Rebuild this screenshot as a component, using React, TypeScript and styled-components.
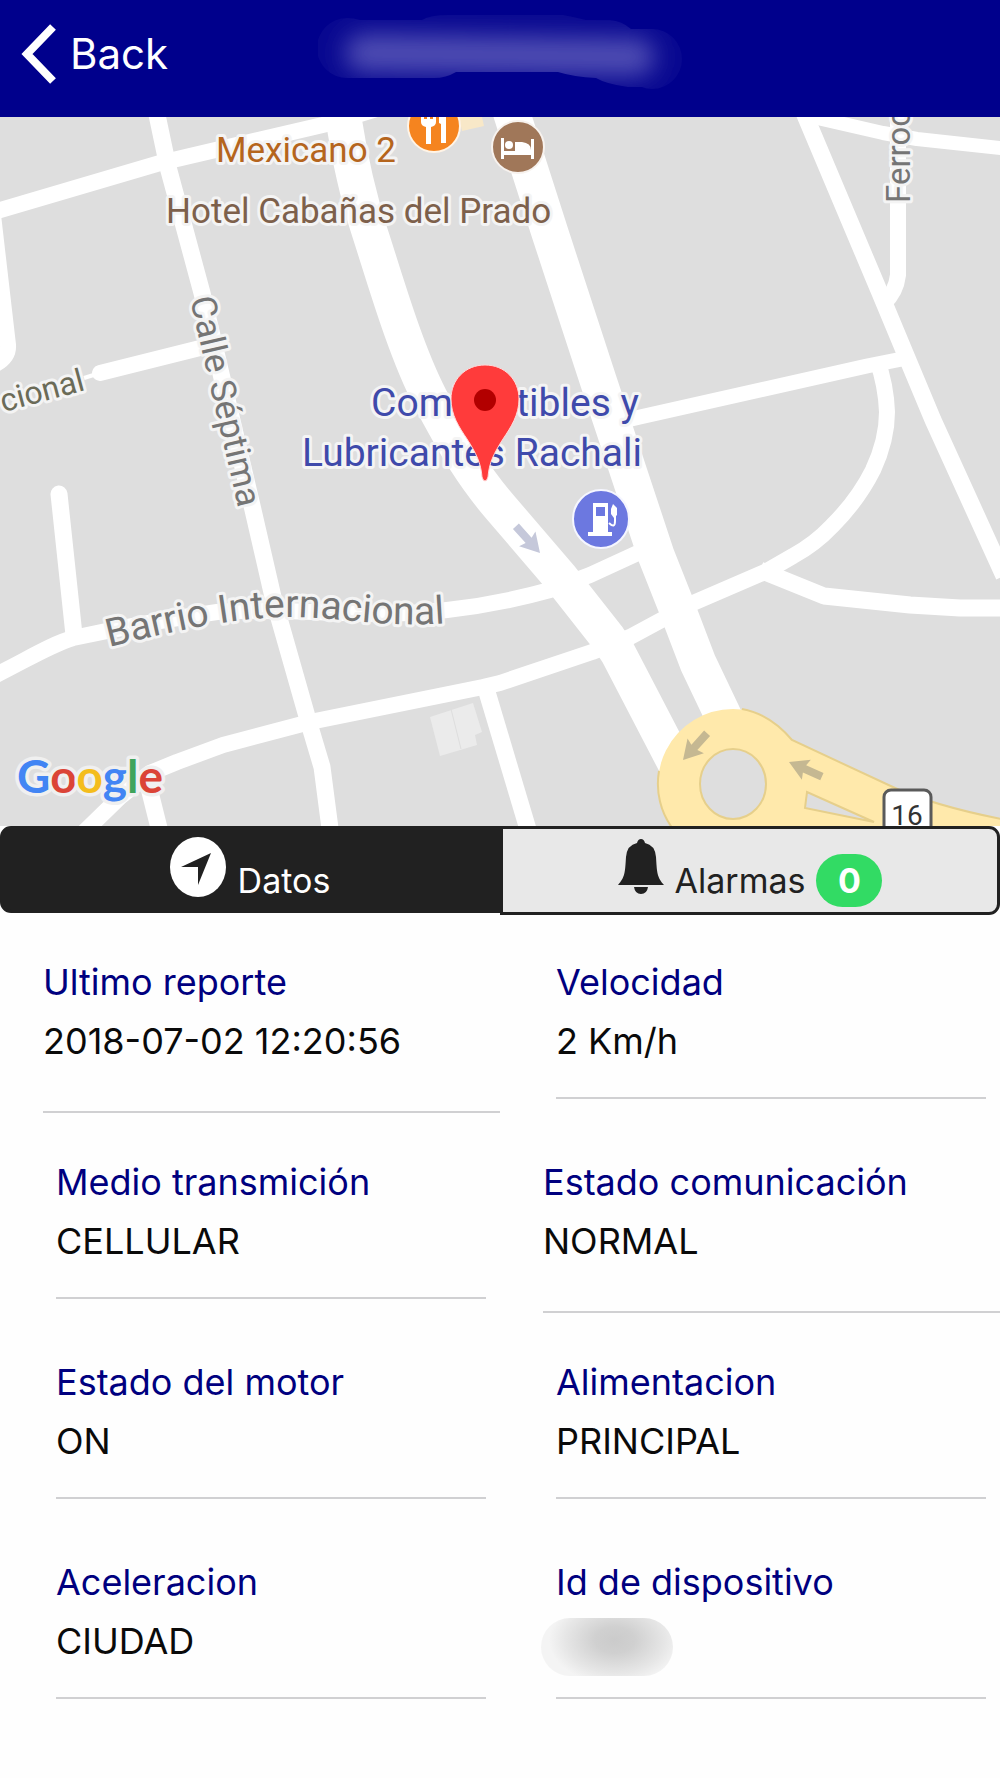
import React, { useState } from "react";
import styled, { createGlobalStyle, css } from "styled-components";

const GlobalStyle = createGlobalStyle`
  *, *::before, *::after { box-sizing: border-box; }
  body {
    margin: 0;
    background: #fefefe;
    color: #0a0a0a;
    font-family: Inter, "Liberation Sans", sans-serif;
  }
  button { font: inherit; cursor: pointer; }
`;

const Page = styled.div`
  display: flex;
  flex-direction: column;
  min-height: 100vh;
`;

const Header = styled.header`
  display: grid;
  grid-template-columns: 1fr auto 1fr;
  align-items: center;
  height: 117px;
  background: #00008c;
`;

const BackButton = styled.button`
  display: flex;
  align-items: center;
  justify-self: start;
  gap: 14px;
  padding: 0 20px;
  margin-bottom: 10px;
  border: 0;
  background: none;
  color: #fff;
  font-size: 42px;
  line-height: 56px;

  svg { display: block; }
`;

const HiddenTitle = styled.svg`
  display: block;
  margin-bottom: 12px;
`;

const Map = styled.svg`
  display: block;
  width: 100%;
  height: auto;
  background: #dedede;
`;

const Road = styled.path<{ $w?: number }>`
  fill: none;
  stroke: #fff;
  stroke-width: ${(p) => p.$w ?? 16};
  stroke-linejoin: round;
`;

const PlaceText = styled.text<{ $color: string; $size: number }>`
  font-family: Roboto, "Liberation Sans", sans-serif;
  font-size: ${(p) => p.$size}px;
  fill: ${(p) => p.$color};
  stroke: #f4f4f4;
  stroke-width: 6px;
  stroke-linejoin: round;
  paint-order: stroke;
`;

const LogoText = styled.text`
  font-family: Lato, "Open Sans", sans-serif;
  font-size: 46px;
  font-weight: 700;
  stroke: #f0f0f0;
  stroke-width: 7px;
  stroke-linejoin: round;
  paint-order: stroke;
`;

const Tabs = styled.div`
  display: grid;
  grid-template-columns: 1fr 1fr;
  align-items: start;
  height: 89px;
`;

const Tab = styled.button<{ $active: boolean; $side: "left" | "right" }>`
  display: flex;
  align-items: flex-start;
  justify-content: center;
  gap: 11px;
  height: ${(p) => (p.$side === "left" ? 87 : 89)}px;
  padding: 8px 0 0;
  border: 3px solid #212121;
  border-radius: ${(p) => (p.$side === "left" ? "11px 0 0 11px" : "0 11px 11px 0")};
  font-size: 34px;
  line-height: 44px;
  ${(p) =>
    p.$active
      ? css`background: #212121; color: #fff;`
      : css`background: #e8e8e8; color: #212121;`}

  svg { display: block; flex: none; }
`;

const TabLabel = styled.span`
  margin-top: 22px;
`;

const Badge = styled.span`
  min-width: 66px;
  margin-top: 17px;
  border-radius: 27px;
  background: #32db64;
  color: #fff;
  font-weight: 700;
  line-height: 53px;
  text-align: center;
`;

const Fields = styled.dl`
  display: grid;
  grid-template-columns: 1fr 1fr;
  margin: 0;
`;

const Field = styled.div<{ $flush?: boolean }>`
  margin: ${(p) => (p.$flush ? "38px 0 2px 43px" : "38px 14px 16px 56px")};
  padding-bottom: ${(p) => (p.$flush ? 40 : 26)}px;
  border-bottom: 2px solid #d0d0d2;
  font-size: 36px;
  line-height: 59px;
`;

const Label = styled.dt`
  color: #00007f;
`;

const Value = styled.dd`
  margin: 0;
`;

const HiddenValue = styled.dd`
  width: 132px;
  height: 58px;
  margin: 6px 0 -5px -15px;
  border-radius: 29px;
  background: radial-gradient(ellipse 66px 44px at 56% 38%, #cbcbcb 0%, #d0d0d0 30%, #e6e6e6 75%, #f4f4f4 100%);
`;

const fields: { label: string; value: string | null; flush?: boolean }[] = [
  { label: "Ultimo reporte", value: "2018-07-02 12:20:56", flush: true },
  { label: "Velocidad", value: "2 Km/h" },
  { label: "Medio transmición", value: "CELLULAR" },
  { label: "Estado comunicación", value: "NORMAL", flush: true },
  { label: "Estado del motor", value: "ON" },
  { label: "Alimentacion", value: "PRINCIPAL" },
  { label: "Aceleracion", value: "CIUDAD" },
  { label: "Id de dispositivo", value: null },
];

function DirectionArrow({ x, y, angle, color }: { x: number; y: number; angle: number; color: string }) {
  return (
    <path
      transform={`translate(${x} ${y}) rotate(${angle})`}
      d="M0 0 L-19 -11 L-17 -4 L-36 -4 L-36 4 L-17 4 L-19 11 Z"
      fill={color}
    />
  );
}

function StreetMap() {
  return (
    <Map viewBox="0 117 1000 709" role="img" aria-label="Mapa">
      <defs>
        <path id="barrio" d="M109 647 C170 632 230 618 285 617 S385 630 460 622" />
      </defs>
      <rect y="117" width="1000" height="709" fill="#dedede" />
      <path d="M430 717 L473 703 L482 732 L475 735 L477 745 L440 756 Z" fill="#ebebeb" />
      <path d="M451 709 L461 749" stroke="#dedede" strokeWidth="1" />
      <path d="M459 117 L482 117 L484 126 L462 131 Z" fill="#f8e8c8" />

      <Road d="M-10 213 L160 163 L327 124 L380 108" />
      <Road d="M156 110 L168 167 L202 293 L253 510 L273 597 L308 720 L322 767 L331 836" $w={17} />
      <Road d="M-7 215 L8 345 Q9 357 -6 365" />
      <Road d="M100 373 L200 348" strokeLinecap="round" />
      <Road d="M84 378 L100 373" $w={4} />
      <Road d="M59 494 L74 635" $w={17} strokeLinecap="round" />
      <Road d="M-8 677 C30 658 50 645 73 638 C110 630 160 620 217 612 C290 606 360 620 447 610 Q500 604 550 590 L590 575 L640 552" />
      <Road d="M80 836 L120 797 L150 773 L177 762 L223 745 L310 722 L483 687 L500 683 L592 652 L630 637 L693 603 L767 571 L793 556 Q815 544 832 526 Q858 500 873 470 Q887 440 887 412 Q886 385 877 360" />
      <Road d="M147 780 L161 836" $w={17} />
      <Road d="M487 692 L530 836" $w={17} />
      <Road d="M760 570 L824 596 L910 605 L960 608 L1010 608" $w={17} />
      <Road d="M610 424 L640 417 L867 366 L907 358" $w={15} />
      <Road d="M802 108 L880 293 L905 353 L933 420 L1004 576" $w={17} />
      <Road d="M800 114 L883 133 L917 139 L1010 149" $w={14} />
      <Road d="M898 110 L898 275 Q896 292 884 303" />
      <Road d="M342 108 C348 150 356 190 370 233 S405 350 430 398 S475 478 500 507 L560 577 L608 638 L618 653 L682 776" $w={36} />
      <Road d="M510 108 L550 233 L599 383 L613 425 L656 555 L677 608 L698 663 L728 726" $w={37} />

      <path
        d="M673 829 A75 75 0 0 1 733 709 Q768 709 792 740 L895 788 Q935 806 1006 820 L1006 836 L680 836 Z"
        fill="#ffe9ab"
      />
      <path
        d="M673 829 A75 75 0 0 1 659 771 M742 709 Q770 714 792 740 L895 788 Q935 806 1006 820"
        fill="none"
        stroke="#e6cf8b"
        strokeWidth="2"
      />
      <ellipse cx="733" cy="784" rx="33" ry="35" fill="#dedede" stroke="#e6cf8b" strokeWidth="2" />
      <path d="M807 792 L805 808 L874 822 Z" fill="#dedede" stroke="#e6cf8b" strokeWidth="2" />
      <DirectionArrow x={683} y={760} angle={132} color="#c5b892" />
      <DirectionArrow x={789} y={762} angle={204} color="#c5b892" />
      <DirectionArrow x={540} y={553} angle={48} color="#c5c8da" />

      <rect x="884" y="790" width="47" height="52" rx="7" fill="#fff" stroke="#5a5a5a" strokeWidth="3" />
      <text x="907" y="825" fontFamily="Roboto, sans-serif" fontSize="28" textAnchor="middle" fill="#333">16</text>

      <circle cx="434" cy="126" r="26" fill="#f5841f" stroke="#fff4e6" strokeWidth="2" />
      <path
        d="M421 108 h3 v11 h3 v-11 h3 v11 h3 v-11 h3 v14 q0 4 -5 5 v17 h-5 v-17 q-5 -1 -5 -5 Z M439 123 V110 q3 -6 7 -6 V143 h-5 V124 Z"
        fill="#fff"
      />
      <circle cx="518" cy="147" r="26" fill="#a07759" stroke="#f7f2ee" strokeWidth="2" />
      <path
        d="M501 138 h3 v13 h11 v-9 h7 q9 1 9 8 v-11 h3 v20 h-3 v-4 h-27 v4 h-3 Z"
        fill="#fff"
      />
      <circle cx="509" cy="145" r="4" fill="#fff" />
      <ellipse cx="601" cy="519" rx="28" ry="29" fill="#6c78e0" stroke="#f5f6ff" strokeWidth="2" />
      <path fillRule="evenodd" d="M593 503 h15 v29 h4 v4 h-24 v-4 h5 Z M596 507 v9 h9 v-9 Z" fill="#fff" />
      <path d="M609 523 q6 6 6 -2 v-6" fill="none" stroke="#fff" strokeWidth="2" />
      <path d="M613 504 l4 4 v7 l-3 3 l-3 -4 v-5 Z" fill="#fff" />

      <PlaceText x="216" y="162" $size={35} $color="#b5651d">Mexicano 2</PlaceText>
      <PlaceText x="166" y="223" $size={35} $color="#7d604b">Hotel Cabañas del Prado</PlaceText>
      <PlaceText x="371" y="416" $size={39} $color="#3f4aab">Combustibles y</PlaceText>
      <PlaceText x="302" y="466" $size={39} $color="#3f4aab">Lubricantes Rachali</PlaceText>
      <PlaceText transform="translate(190 299) rotate(77)" $size={35} $color="#757575">Calle Séptima</PlaceText>
      <PlaceText transform="translate(86 390) rotate(-15)" textAnchor="end" $size={32} $color="#6b6b58">cional</PlaceText>
      <PlaceText transform="translate(910 203) rotate(-90)" $size={33} $color="#757575">Ferroc</PlaceText>
      <PlaceText $size={39} $color="#757575">
        <textPath href="#barrio">Barrio Internacional</textPath>
      </PlaceText>

      <path
        d="M485 365 C505 365 519 380 519 399 C519 415 511 427 503 439 C494 453 489 463 488 477 Q487 481 485 481 Q483 481 482 477 C481 463 476 453 467 439 C459 427 451 415 451 399 C451 380 465 365 485 365 Z"
        fill="#ff3b3b"
        stroke="#ffd9d9"
        strokeWidth="1"
      />
      <circle cx="485" cy="400" r="11" fill="#b20000" />

      <LogoText x="17" y="793">
        <tspan fill="#4285f4">G</tspan>
        <tspan fill="#db4437">o</tspan>
        <tspan fill="#f4bd1c">o</tspan>
        <tspan fill="#4285f4">g</tspan>
        <tspan fill="#3fa45b">l</tspan>
        <tspan fill="#db4437">e</tspan>
      </LogoText>
    </Map>
  );
}

export default function App() {
  const [tab, setTab] = useState<"datos" | "alarmas">("datos");

  return (
    <Page>
      <GlobalStyle />
      <Header>
        <BackButton type="button">
          <svg width="36" height="60" viewBox="0 0 36 60" aria-hidden="true">
            <path d="M33 3 L7 30 L33 57" fill="none" stroke="#fff" strokeWidth="8" />
          </svg>
          Back
        </BackButton>
        <HiddenTitle width="364" height="76" viewBox="0 0 364 76" aria-hidden="true">
          <defs>
            <filter id="soft" filterUnits="userSpaceOnUse" x="-60" y="-60" width="500" height="200">
              <feGaussianBlur stdDeviation="12" />
            </filter>
            <clipPath id="cover">
              <path d="M29 3 Q36 3 42 5 H104 Q112 0 130 0 H245 Q256 2 268 5 H292 Q304 6 313 14 H334 A30 30 0 0 1 334 74 Q328 74 324 72 H310 Q288 69 278 63 Q256 62 240 57 H138 Q128 63 116 63 H29 A30 30 0 0 1 29 3 Z" />
            </clipPath>
          </defs>
          <g clipPath="url(#cover)">
            <rect width="364" height="76" fill="#080890" />
            <path d="M46 38 L318 42" stroke="#504db3" strokeWidth="38" strokeLinecap="round" filter="url(#soft)" />
          </g>
        </HiddenTitle>
      </Header>

      <StreetMap />

      <Tabs role="tablist">
        <Tab type="button" role="tab" aria-selected={tab === "datos"} $active={tab === "datos"} $side="left" onClick={() => setTab("datos")}>
          <svg width="57" height="60" viewBox="0 0 57 60" aria-hidden="true">
            <ellipse cx="28" cy="30" rx="28" ry="30" fill="currentColor" />
            <path d="M41 16 L28 48 L28 30 L11 30 Z" fill="#212121" />
          </svg>
          <TabLabel>Datos</TabLabel>
        </Tab>
        <Tab type="button" role="tab" aria-selected={tab === "alarmas"} $active={tab === "alarmas"} $side="right" onClick={() => setTab("alarmas")}>
          <svg width="46" height="60" viewBox="0 0 46 60" aria-hidden="true">
            <path
              d="M23 2 Q26 2 27 6 Q37 8 38 20 C39 36 39 40 46 48 H0 C7 40 7 36 8 20 Q9 8 19 6 Q20 2 23 2 Z M16 50 H30 Q29 57 23 57 Q17 57 16 50 Z"
              fill="currentColor"
            />
          </svg>
          <TabLabel>Alarmas</TabLabel>
          <Badge>0</Badge>
        </Tab>
      </Tabs>

      <Fields>
        {fields.map((f) => (
          <Field key={f.label} $flush={f.flush}>
            <Label>{f.label}</Label>
            {f.value === null ? <HiddenValue /> : <Value>{f.value}</Value>}
          </Field>
        ))}
      </Fields>
    </Page>
  );
}
